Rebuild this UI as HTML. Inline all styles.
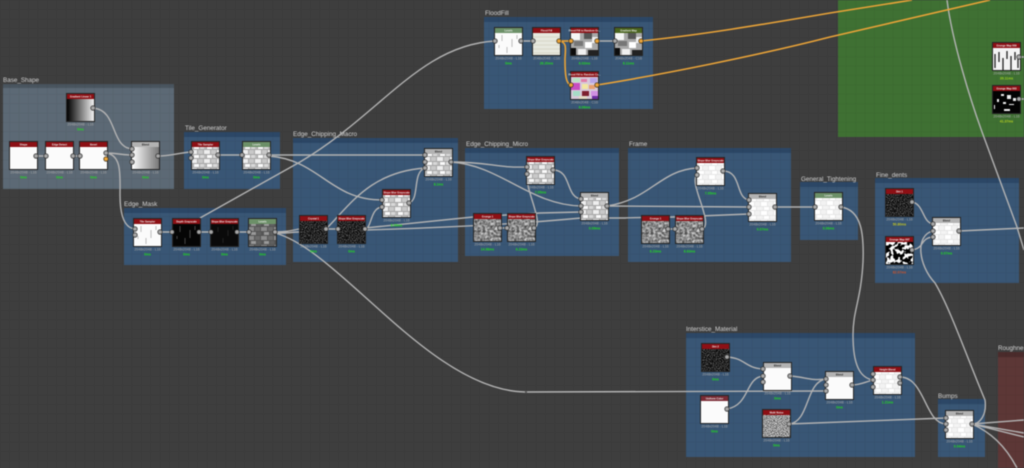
<!DOCTYPE html>
<html lang="en">
<head>
<meta charset="utf-8">
<title>Node graph</title>
<style>
html,body{margin:0;padding:0;background:#3c3c3c;overflow:hidden}
svg{display:block;font-family:"Liberation Sans",sans-serif;filter:blur(.4px)}
.t{font-size:6.3px;fill:#d2d2d2}
.h{font-size:2.6px;fill:#eee;text-anchor:middle;font-weight:bold}
.d{font-size:3.5px;fill:#aaa;text-anchor:middle}
.m{font-size:3.4px;fill:#22d822;text-anchor:middle;font-weight:bold}
.w{stroke:#b2b2b2;stroke-width:1.4;fill:none}
.o{stroke:#e9a338;stroke-width:1.6;fill:none}
</style>
</head>
<body>
<svg width="1024" height="468" viewBox="0 0 1024 468" xmlns="http://www.w3.org/2000/svg">
<defs>
<pattern id="grid" width="9.4" height="9.4" patternUnits="userSpaceOnUse"><path d="M9.4 0H0V9.4" fill="none" stroke="#000" stroke-opacity=".08" stroke-width="1"/></pattern>
<pattern id="brick" width="13" height="9" patternUnits="userSpaceOnUse">
<rect width="13" height="9" fill="#a6a6a6"/>
<rect x="0" y="0" width="6" height="4" fill="#eeeeee"/><rect x="7" y="0" width="5" height="4" fill="#c8c8c8"/>
<rect x="3" y="5" width="5" height="3" fill="#fafafa"/><rect x="9" y="5" width="4" height="3" fill="#d8d8d8"/>
<rect x="0" y="5" width="2" height="3" fill="#bcbcbc"/>
</pattern>
<pattern id="brickl" width="13" height="9" patternUnits="userSpaceOnUse">
<rect width="13" height="9" fill="#e6e6e6"/>
<rect x="0" y="0" width="6" height="4" fill="#fff"/><rect x="7" y="0" width="5" height="4" fill="#f2f2f2"/>
<rect x="3" y="5" width="5" height="3" fill="#fff"/><rect x="9" y="5" width="4" height="3" fill="#f4f4f4"/>
<rect x="0" y="5" width="2" height="3" fill="#f2f2f2"/>
</pattern>
<pattern id="rot" width="13" height="9" patternUnits="userSpaceOnUse">
<rect width="13" height="9" fill="#555"/>
<rect x="0" y="0" width="6" height="4" fill="#8c8c8c"/><rect x="7" y="0" width="5" height="4" fill="#6c6c6c"/>
<rect x="3" y="5" width="5" height="3" fill="#999"/><rect x="9" y="5" width="4" height="3" fill="#606060"/>
</pattern>
<linearGradient id="gh"><stop offset="0" stop-color="#000"/><stop offset="1" stop-color="#f2f2f2"/></linearGradient>
<linearGradient id="gb"><stop offset="0" stop-color="#fff"/><stop offset="1" stop-color="#777"/></linearGradient>
<filter id="fd" x="0" y="0" width="100%" height="100%" color-interpolation-filters="sRGB"><feTurbulence type="fractalNoise" baseFrequency="1.3" numOctaves="1" seed="3"/><feColorMatrix values="2.2 0 0 0 -1 2.2 0 0 0 -1 2.2 0 0 0 -1 0 0 0 0 1"/></filter>
<filter id="fg" x="0" y="0" width="100%" height="100%" color-interpolation-filters="sRGB"><feTurbulence type="fractalNoise" baseFrequency=".4" numOctaves="3" seed="8"/><feColorMatrix values="1 0 0 0 .05 1 0 0 0 .05 1 0 0 0 .05 0 0 0 0 1"/></filter>
<filter id="fn" x="0" y="0" width="100%" height="100%" color-interpolation-filters="sRGB"><feTurbulence type="fractalNoise" baseFrequency="1.3" numOctaves="1" seed="5"/><feColorMatrix values="2.4 0 0 0 -.6 2.4 0 0 0 -.6 2.4 0 0 0 -.6 0 0 0 0 1"/></filter>
<filter id="fb" x="0" y="0" width="100%" height="100%" color-interpolation-filters="sRGB"><feTurbulence type="fractalNoise" baseFrequency=".22" numOctaves="2" seed="11"/><feColorMatrix values="14 0 0 0 -6.6 14 0 0 0 -6.6 14 0 0 0 -6.6 0 0 0 0 1"/></filter>

<g id="R"><rect width="29" height="29" fill="#262626"/><rect x="1" y="1" width="27" height="5" fill="#8c1015"/></g>
<g id="G"><rect width="29" height="29" fill="#262626"/><rect x="1" y="1" width="27" height="5" fill="#6c9068"/></g>
<g id="Y"><rect width="29" height="29" fill="#262626"/><rect x="1" y="1" width="27" height="5" fill="#b2b2b2"/></g>
<g id="O"><rect width="29" height="29" fill="#262626"/><rect x="1" y="1" width="27" height="5" fill="#4a641f"/></g>
<g id="M"><rect width="29" height="29" fill="#262626"/><rect x="1" y="1" width="27" height="5" fill="#7a2b35"/></g>

<rect id="white" x="1" y="6" width="27" height="22" fill="#fbfbfb"/>
<rect id="soft" x="1" y="6" width="27" height="22" fill="url(#brickl)"/>
<rect id="bricks" x="1" y="6" width="27" height="22" fill="url(#brick)"/>
<rect id="nd" x="1" y="6" width="27" height="22" filter="url(#fd)"/>
<rect id="ng" x="1" y="6" width="27" height="22" filter="url(#fg)"/>
<rect id="nn" x="1" y="6" width="27" height="22" filter="url(#fn)"/>
<rect id="nb" x="1" y="6" width="27" height="22" filter="url(#fb)"/>
<rect id="rots" x="1" y="6" width="27" height="22" fill="url(#rot)"/>

<g id="tmask"><rect x="1" y="6" width="27" height="22" fill="#fbfbfb"/><path d="M8 8v6M18 12v8M23 8v4M13 20v6M5 18v3" stroke="#bbb" stroke-width="1"/></g>
<g id="tdepth"><rect x="1" y="6" width="27" height="22" fill="#050505"/><path d="M8 8v6M18 12v8M23 8v4M13 20v6M5 18v3" stroke="#444" stroke-width="1"/></g>
<g id="tdark"><rect x="1" y="6" width="27" height="22" fill="#0a0a0a"/><path d="M8 9v5M18 12v6M23 8v4M13 20v5" stroke="#222" stroke-width="1"/></g>
<g id="tflood"><rect x="1" y="6" width="27" height="22" fill="#e6e8de"/><path d="M1 10h27M1 14h27M1 18h27M1 22h27M1 26h27" stroke="#d8d6c8" stroke-width="1"/></g>
<g id="tblock"><rect x="1" y="6" width="27" height="22" fill="#a8a8a8"/><rect x="1" y="6" width="9" height="7" fill="#f6f6f6"/><rect x="14" y="6" width="8" height="6" fill="#555"/><rect x="22" y="10" width="6" height="6" fill="#eee"/><rect x="4" y="14" width="9" height="5" fill="#777"/><rect x="15" y="15" width="7" height="6" fill="#fff"/><rect x="1" y="21" width="5" height="7" fill="#0c0c0c"/><rect x="8" y="22" width="8" height="6" fill="#f0f0f0"/><rect x="18" y="23" width="10" height="5" fill="#222"/></g>
<g id="tcol"><rect x="1" y="6" width="27" height="22" fill="#d7c9d9"/><rect x="3" y="7" width="7" height="4" fill="#b8e3c2"/><rect x="11" y="8" width="6" height="3" fill="#e07fa8"/><rect x="20" y="7" width="7" height="5" fill="#b7a5e6"/><rect x="1" y="12" width="9" height="7" fill="#c84ec0"/><rect x="12" y="13" width="6" height="5" fill="#f2e6a0"/><rect x="19" y="14" width="6" height="4" fill="#e8a070"/><rect x="3" y="20" width="7" height="5" fill="#a6dbc6"/><rect x="12" y="20" width="7" height="5" fill="#7d2030"/><rect x="21" y="20" width="7" height="5" fill="#cf8fe0"/><rect x="9" y="25" width="8" height="3" fill="#e3dbc6"/><rect x="22" y="25" width="6" height="3" fill="#6c2ea0"/></g>
<g id="tblobs"><rect x="1" y="6" width="27" height="22" fill="#030303"/><path d="M9 9h3v2H9zM15 10h4v4h-4zM5 14h2v3H5zM21 13h3v3h-3zM11 17h3v2h-3zM17 19h5v1h-5zM12 24h6v2h-6zM2 20h1v4H2z" fill="#eee"/></g>
<g id="tstreak"><rect x="1" y="6" width="27" height="22" fill="#f4f4f4"/><path d="M3 12v14M7 10v10M11 16v12M15 9v8M19 14v14M23 10v8M26 17v9" stroke="#222" stroke-width="1.3"/></g>

<path id="dots" d="M93 108h0M36 156h0M46 156h0M73 156h0M80 156h0M106 153h0M132 149h0M132 155h0M132 162h0M158 156h0M191 152h0M191 158h0M218 155h0M242 155h0M269 155h0M135 229h0M135 235h0M160 232h0M172 232h0M199 232h0M211 232h0M237 232h0M249 232h0M275 232h0M326 229h0M338 229h0M365 229h0M382 200h0M382 207h0M409 203h0M425 155h0M425 162h0M425 168h0M451 162h0M527 167h0M527 174h0M553 170h0M581 199h0M581 206h0M581 212h0M607 206h0M500 228h0M507 228h0M534 228h0M697 168h0M697 175h0M723 171h0M749 200h0M749 207h0M749 214h0M775 207h0M668 229h0M675 229h0M702 229h0M815 207h0M841 207h0M912 202h0M912 250h0M933 224h0M933 231h0M933 237h0M959 231h0M495 41h0M521 41h0M533 41h0M615 41h0M727 357h0M727 409h0M763 369h0M763 376h0M763 382h0M790 376h0M789 424h0M826 379h0M826 385h0M826 391h0M852 385h0M873 374h0M873 380h0M873 387h0M900 377h0M900 383h0M946 418h0M946 424h0M946 430h0M972 424h0M1019 57h0M1019 99h0"/>
<path id="odots" d="M106 159h0M559 41h0M571 41h0M597 41h0M641 41h0M571 85h0M597 85h0"/>
</defs>

<rect width="1024" height="468" fill="#3e3e3e"/>

<!-- frames -->
<rect x="838" y="0" width="186" height="137" fill="#3f7033"/>
<rect x="3" y="84" width="171" height="105" fill="#5c6975"/><rect x="3" y="84" width="171" height="4" fill="#4a555f"/>
<rect x="184" y="132" width="96" height="57" fill="#395675"/><rect x="184" y="132" width="96" height="5" fill="#2c4766"/>
<rect x="124" y="208" width="162" height="57" fill="#395675"/><rect x="124" y="208" width="162" height="5" fill="#2c4766"/>
<rect x="293" y="138" width="165" height="124" fill="#395675"/><rect x="293" y="138" width="165" height="5" fill="#2c4766"/>
<rect x="465" y="148" width="154" height="108" fill="#395675"/><rect x="465" y="148" width="154" height="5" fill="#2c4766"/>
<rect x="628" y="148" width="163" height="114" fill="#395675"/><rect x="628" y="148" width="163" height="5" fill="#2c4766"/>
<rect x="800" y="182" width="58" height="58" fill="#395675"/><rect x="800" y="182" width="58" height="5" fill="#2c4766"/>
<rect x="875" y="178" width="144" height="105" fill="#395675"/><rect x="875" y="178" width="144" height="5" fill="#2c4766"/>
<rect x="484" y="17" width="169" height="92" fill="#395675"/><rect x="484" y="17" width="169" height="5" fill="#2c4766"/>
<rect x="686" y="333" width="229" height="124" fill="#395675"/><rect x="686" y="333" width="229" height="5" fill="#2c4766"/>
<rect x="938" y="399" width="47" height="58" fill="#395675"/><rect x="938" y="399" width="47" height="5" fill="#2c4766"/>
<rect x="998" y="352" width="26" height="116" fill="#5c3736"/><rect x="998" y="352" width="26" height="5" fill="#4a2b2b"/>
<rect width="1024" height="468" fill="url(#grid)"/>

<!-- frame titles -->
<text class="t" x="3" y="82">Base_Shape</text>
<text class="t" x="185" y="130">Tile_Generator</text>
<text class="t" x="124" y="206">Edge_Mask</text>
<text class="t" x="293" y="136">Edge_Chipping_Macro</text>
<text class="t" x="466" y="146">Edge_Chipping_Micro</text>
<text class="t" x="629" y="146">Frame</text>
<text class="t" x="801" y="181">General_Tightening</text>
<text class="t" x="876" y="177">Fine_dents</text>
<text class="t" x="485" y="15">FloodFill</text>
<text class="t" x="686" y="331">Interstice_Material</text>
<text class="t" x="938" y="398">Bumps</text>
<text class="t" x="998" y="350">Roughness</text>

<!-- wires -->
<g class="w">
<path d="M93 108C118 110 110 147 132 149"/>
<path d="M36 156H46M73 156H80M106 153C118 153 120 155 132 155M158 156C170 156 178 153 191 152M218 155H242M160 232H172M199 232H211M237 232H249"/>
<path d="M106 153C122 155 120 175 120 195C120 215 124 228 135 229"/>
<path d="M269 155C320 155 370 155 425 155"/>
<path d="M269 156C320 160 330 200 382 200"/>
<path d="M200 218L300 162C380 115 420 45 495 41"/>
<path d="M275 232C285 232 290 231 299 229M275 233C285 234 290 232 299 232M326 229H338"/>
<path d="M275 233C340 250 430 390 525 392L826 391"/>
<path d="M326 229C350 205 370 172 425 168"/>
<path d="M365 229C372 228 370 208 382 207"/>
<path d="M409 203C420 200 412 172 425 168"/>
<path d="M365 228L473 217L540 213L581 212"/>
<path d="M365 230C430 228 520 224 581 218L625 218C640 217 660 218 700 216L749 214"/>
<path d="M451 162C490 162 495 168 527 167"/>
<path d="M451 162C500 165 530 205 581 206"/>
<path d="M553 170C572 170 565 197 581 199"/>
<path d="M500 228H507M668 229H675"/>
<path d="M534 228C545 225 525 190 527 174"/>
<path d="M607 206C650 200 660 170 697 168"/>
<path d="M607 206L749 207"/>
<path d="M702 229C715 225 688 182 697 175"/>
<path d="M723 171C742 171 735 198 749 200"/>
<path d="M775 207H815"/>
<path d="M841 207C862 210 864 235 863 262C861 300 853 310 853 335C853 365 860 378 873 380"/>
<path d="M912 202C924 204 922 222 933 224"/>
<path d="M912 250C925 248 920 238 933 237"/>
<path d="M933 231C915 235 918 265 935 283C950 308 968 360 985 400C987 415 980 424 972 424"/>
<path d="M959 231L1024 228"/>
<path d="M947 0C952 40 970 100 985 140L1017 227L1024 250"/>
<path d="M521 41H533M597 41H615"/>
<path d="M727 357C745 358 745 368 763 369"/>
<path d="M727 409C750 405 745 378 763 376"/>
<path d="M790 376C806 377 810 381 826 379"/>
<path d="M789 424C810 422 805 382 826 379"/>
<path d="M789 424L946 418"/>
<path d="M852 385C860 385 865 382 873 380"/>
<path d="M900 377C925 377 925 424 946 424"/>
<path d="M972 424L1024 420M972 424L1024 433M972 424L1024 437M972 424C990 432 1005 445 1017 468"/>
<path d="M1019 57H1024M1019 99H1024"/>
</g>
<g class="o">
<path d="M559 41H571"/>
<path d="M559 41C568 42 565 50 565 60C565 75 566 84 571 85"/>
<path d="M641 41C700 35 760 25 830 13L912 0"/>
<path d="M597 85C660 75 760 55 830 37L990 0"/>
</g>
<path d="M525 392h2" stroke="#555" stroke-width="1.5"/>

<!-- Base_Shape -->
<g transform="translate(66,93)"><use href="#R"/><rect x="1" y="6" width="27" height="22" fill="url(#gh)"/><text class="h" x="14.5" y="4.4">Gradient Linear 1</text><text class="d" x="14.5" y="32.5">2048x2048 - L16</text><text class="m" x="14.5" y="37.5">0ms</text></g>
<g transform="translate(9,141)"><use href="#R"/><use href="#white"/><text class="h" x="14.5" y="4.4">Shape</text><text class="d" x="14.5" y="32.5">2048x2048 - L16</text><text class="m" x="14.5" y="37.5">0ms</text></g>
<g transform="translate(45,141)"><use href="#R"/><use href="#white"/><text class="h" x="14.5" y="4.4">Edge Detect</text><text class="d" x="14.5" y="32.5">2048x2048 - L16</text><text class="m" x="14.5" y="37.5">0ms</text></g>
<g transform="translate(79,141)"><use href="#R"/><use href="#white"/><text class="h" x="14.5" y="4.4">Bevel</text><text class="d" x="14.5" y="32.5">2048x2048 - L16</text><text class="m" x="14.5" y="37.5">0ms</text></g>
<g transform="translate(131,141)"><use href="#Y"/><rect x="1" y="6" width="27" height="22" fill="url(#gb)"/><text class="h" x="14.5" y="4.4" style="fill:#222">Blend</text><text class="d" x="14.5" y="32.5">2048x2048 - L16</text><text class="m" x="14.5" y="37.5">0ms</text></g>
<!-- Tile_Generator -->
<g transform="translate(191,141)"><use href="#R"/><use href="#bricks"/><text class="h" x="14.5" y="4.4">Tile Sampler</text><text class="d" x="14.5" y="32.5">2048x2048 - L16</text><text class="m" x="14.5" y="37.5">0ms</text></g>
<g transform="translate(242,141)"><use href="#G"/><use href="#bricks"/><text class="h" x="14.5" y="4.4">Levels</text><text class="d" x="14.5" y="32.5">2048x2048 - L16</text><text class="m" x="14.5" y="37.5">0ms</text></g>
<!-- Edge_Mask -->
<g transform="translate(133,218)"><use href="#R"/><use href="#tmask"/><text class="h" x="14.5" y="4.4">Tile Sampler</text><text class="d" x="14.5" y="32.5">2048x2048 - L16</text><text class="m" x="14.5" y="37.5">0ms</text></g>
<g transform="translate(172,218)"><use href="#R"/><use href="#tdepth"/><text class="h" x="14.5" y="4.4">Depth Grayscale</text><text class="d" x="14.5" y="32.5">2048x2048 - L16</text><text class="m" x="14.5" y="37.5">0ms</text></g>
<g transform="translate(210,218)"><use href="#R"/><use href="#tdark"/><text class="h" x="14.5" y="4.4">Slope Blur Grayscale</text><text class="d" x="14.5" y="32.5">2048x2048 - L16</text><text class="m" x="14.5" y="37.5">0ms</text></g>
<g transform="translate(248,218)"><use href="#G"/><use href="#rots"/><text class="h" x="14.5" y="4.4">Levels</text><text class="d" x="14.5" y="32.5">2048x2048 - L16</text><text class="m" x="14.5" y="37.5">0ms</text></g>
<!-- Macro -->
<g transform="translate(299,215)"><use href="#R"/><use href="#nd"/><text class="h" x="14.5" y="4.4">Crystal 1</text><text class="d" x="14.5" y="32.5">2048x2048 - L16</text><text class="m" x="14.5" y="37.5">0ms</text></g>
<g transform="translate(337,215)"><use href="#R"/><use href="#nd"/><text class="h" x="14.5" y="4.4">Slope Blur Grayscale</text><text class="d" x="14.5" y="32.5">2048x2048 - L16</text><text class="m" x="14.5" y="37.5">0ms</text></g>
<g transform="translate(382,189)"><use href="#R"/><use href="#bricks"/><text class="h" x="14.5" y="4.4">Slope Blur Grayscale</text><text class="d" x="14.5" y="32.5">2048x2048 - L16</text><text class="m" x="14.5" y="37.5">8.09ms</text></g>
<g transform="translate(424,148)"><use href="#Y"/><use href="#bricks"/><text class="h" x="14.5" y="4.4" style="fill:#222">Blend</text><text class="d" x="14.5" y="32.5">2048x2048 - L16</text><text class="m" x="14.5" y="37.5">8.1ms</text></g>
<!-- Micro -->
<g transform="translate(526,156)"><use href="#R"/><use href="#bricks"/><text class="h" x="14.5" y="4.4">Slope Blur Grayscale</text><text class="d" x="14.5" y="32.5">2048x2048 - L16</text><text class="m" x="14.5" y="37.5">7.05ms</text></g>
<g transform="translate(580,192)"><use href="#Y"/><use href="#bricks"/><text class="h" x="14.5" y="4.4" style="fill:#222">Blend</text><text class="d" x="14.5" y="32.5">2048x2048 - L16</text><text class="m" x="14.5" y="37.5">0.09ms</text></g>
<g transform="translate(473,213)"><use href="#R"/><use href="#ng"/><text class="h" x="14.5" y="4.4">Grunge 1</text><text class="d" x="14.5" y="32.5">2048x2048 - L16</text><text class="m" x="14.5" y="37.5">14.98ms</text></g>
<g transform="translate(507,213)"><use href="#R"/><use href="#ng"/><text class="h" x="14.5" y="4.4">Slope Blur Grayscale</text><text class="d" x="14.5" y="32.5">2048x2048 - L16</text><text class="m" x="14.5" y="37.5">6.23ms</text></g>
<!-- Frame -->
<g transform="translate(696,157)"><use href="#R"/><use href="#soft"/><text class="h" x="14.5" y="4.4">Slope Blur Grayscale</text><text class="d" x="14.5" y="32.5">2048x2048 - L16</text><text class="m" x="14.5" y="37.5">7.05ms</text></g>
<g transform="translate(748,193)"><use href="#Y"/><use href="#soft"/><text class="h" x="14.5" y="4.4" style="fill:#222">Blend</text><text class="d" x="14.5" y="32.5">2048x2048 - L16</text><text class="m" x="14.5" y="37.5">0.07ms</text></g>
<g transform="translate(641,215)"><use href="#R"/><use href="#ng"/><text class="h" x="14.5" y="4.4">Grunge 1</text><text class="d" x="14.5" y="32.5">2048x2048 - L16</text><text class="m" x="14.5" y="37.5">6.23ms</text></g>
<g transform="translate(675,215)"><use href="#R"/><use href="#ng"/><text class="h" x="14.5" y="4.4">Slope Blur Grayscale</text><text class="d" x="14.5" y="32.5">2048x2048 - L16</text><text class="m" x="14.5" y="37.5">6.63ms</text></g>
<!-- Tightening -->
<g transform="translate(814,192)"><use href="#G"/><use href="#soft"/><text class="h" x="14.5" y="4.4">Levels</text><text class="d" x="14.5" y="32.5">2048x2048 - L16</text><text class="m" x="14.5" y="37.5">0.06ms</text></g>
<!-- Fine dents -->
<g transform="translate(885,188)"><use href="#R"/><use href="#nd"/><text class="h" x="14.5" y="4.4">Dirt 1</text><text class="d" x="14.5" y="32.5">2048x2048 - L16</text><text class="m" x="14.5" y="37.5" style="fill:#c6c622">50.80ms</text></g>
<g transform="translate(885,236)"><use href="#R"/><use href="#nb"/><text class="h" x="14.5" y="4.4">Grunge Map 007</text><text class="d" x="14.5" y="32.5">2048x2048 - L16</text><text class="m" x="14.5" y="37.5" style="fill:#d2542a">82.07ms</text></g>
<g transform="translate(932,217)"><use href="#Y"/><use href="#soft"/><text class="h" x="14.5" y="4.4" style="fill:#222">Blend</text><text class="d" x="14.5" y="32.5">2048x2048 - L16</text><text class="m" x="14.5" y="37.5">0.07ms</text></g>
<!-- FloodFill -->
<g transform="translate(494,27)"><use href="#G"/><use href="#tmask"/><text class="h" x="14.5" y="4.4">Levels</text><text class="d" x="14.5" y="32.5">2048x2048 - L16</text><text class="m" x="14.5" y="37.5">0ms</text></g>
<g transform="translate(532,27)"><use href="#R"/><use href="#tflood"/><text class="h" x="14.5" y="4.4">Flood Fill</text><text class="d" x="14.5" y="32.5">2048x2048 - C16</text><text class="m" x="14.5" y="37.5">26.20ms</text></g>
<g transform="translate(570,27)"><use href="#R"/><use href="#tblock"/><text class="h" x="14.5" y="4.4">Flood Fill to Random Gr...</text><text class="d" x="14.5" y="32.5">2048x2048 - L16</text><text class="m" x="14.5" y="37.5">6.02ms</text></g>
<g transform="translate(614,27)"><use href="#O"/><use href="#tblock"/><text class="h" x="14.5" y="4.4">Gradient Map</text><text class="d" x="14.5" y="32.5">2048x2048 - C16</text><text class="m" x="14.5" y="37.5">6.11ms</text></g>
<g transform="translate(570,71)"><use href="#R"/><use href="#tcol"/><text class="h" x="14.5" y="4.4">Flood Fill to Random Co...</text><text class="d" x="14.5" y="32.5">2048x2048 - C16</text><text class="m" x="14.5" y="37.5">6.06ms</text></g>
<!-- Interstice -->
<g transform="translate(701,343)"><use href="#R"/><use href="#nd"/><text class="h" x="14.5" y="4.4">Dirt 2</text><text class="d" x="14.5" y="32.5">2048x2048 - L16</text><text class="m" x="14.5" y="37.5">0ms</text></g>
<g transform="translate(763,362)"><use href="#Y"/><use href="#white"/><text class="h" x="14.5" y="4.4" style="fill:#222">Blend</text><text class="d" x="14.5" y="32.5">2048x2048 - L16</text><text class="m" x="14.5" y="37.5">0ms</text></g>
<g transform="translate(700,395)"><use href="#M"/><use href="#white"/><text class="h" x="14.5" y="4.4">Uniform Color</text><text class="d" x="14.5" y="32.5">2048x2048 - L16</text><text class="m" x="14.5" y="37.5">0ms</text></g>
<g transform="translate(762,409)"><use href="#R"/><use href="#nn"/><text class="h" x="14.5" y="4.4">Multi Noise</text><text class="d" x="14.5" y="32.5">2048x2048 - L16</text><text class="m" x="14.5" y="37.5">0ms</text></g>
<g transform="translate(825,371)"><use href="#Y"/><use href="#white"/><text class="h" x="14.5" y="4.4" style="fill:#222">Blend</text><text class="d" x="14.5" y="32.5">2048x2048 - L16</text><text class="m" x="14.5" y="37.5">0ms</text></g>
<g transform="translate(873,366)"><use href="#R"/><use href="#soft"/><text class="h" x="14.5" y="4.4">Height Blend</text><text class="d" x="14.5" y="32.5">2048x2048 - L16</text><text class="m" x="14.5" y="37.5">1.21ms</text></g>
<g transform="translate(945,410)"><use href="#Y"/><use href="#soft"/><text class="h" x="14.5" y="4.4" style="fill:#222">Blend</text><text class="d" x="14.5" y="32.5">2048x2048 - L16</text><text class="m" x="14.5" y="37.5">0.04ms</text></g>
<!-- Right -->
<g transform="translate(992,42)"><use href="#R"/><use href="#tstreak"/><text class="h" x="14.5" y="4.4">Grunge Map 009</text><text class="d" x="14.5" y="32.5">2048x2048 - L16</text><text class="m" x="14.5" y="37.5" style="fill:#9ed022">39.11ms</text></g>
<g transform="translate(992,85)"><use href="#R"/><use href="#tblobs"/><text class="h" x="14.5" y="4.4">Grunge Map 003</text><text class="d" x="14.5" y="32.5">2048x2048 - L16</text><text class="m" x="14.5" y="37.5" style="fill:#b6d022">41.37ms</text></g>

<!-- connectors -->
<use href="#dots" fill="none" stroke="#2a2a2a" stroke-width="5.2" stroke-linecap="round"/>
<use href="#dots" fill="none" stroke="#a6a6a6" stroke-width="3.8" stroke-linecap="round"/>
<use href="#odots" fill="none" stroke="#3a3020" stroke-width="5.2" stroke-linecap="round"/>
<use href="#odots" fill="none" stroke="#e9a338" stroke-width="3.8" stroke-linecap="round"/>
</svg>
</body>
</html>
